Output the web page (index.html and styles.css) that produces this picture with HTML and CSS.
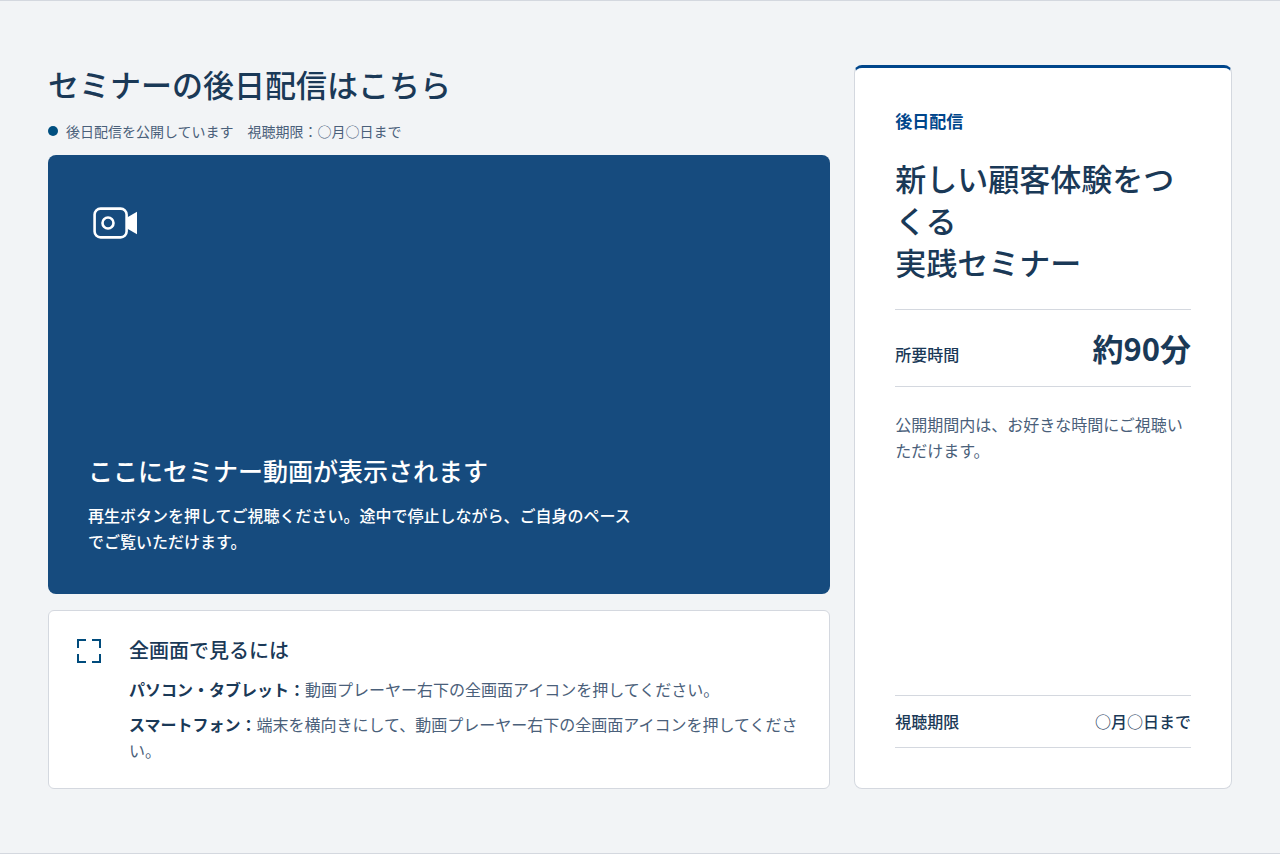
FILE: index.html
```html
<!DOCTYPE html>
<html lang="ja">
<head>
<meta charset="utf-8">
<meta name="viewport" content="width=device-width, initial-scale=1">
<title>セミナーの後日配信はこちら</title>
<link rel="stylesheet" href="styles.css">
</head>
<body>
<main class="page">
  <section class="watch">
    <h1 class="watch-title">セミナーの後日配信はこちら</h1>
    <p class="status"><span class="status-dot"></span>後日配信を公開しています　視聴期限：○月○日まで</p>
    <div class="video">
      <svg class="video-icon" viewBox="0 0 56 56" aria-hidden="true">
        <rect x="6.6" y="13.6" width="32" height="28.8" rx="6" fill="none" stroke="#fff" stroke-width="2.6"/>
        <circle cx="20" cy="28" r="5.5" fill="none" stroke="#fff" stroke-width="2.6"/>
        <path d="M39 22.6 L49 16.7 V39.3 L39 33.4 Z" fill="#fff"/>
      </svg>
      <div class="video-copy">
        <h2 class="video-title">ここにセミナー動画が表示されます</h2>
        <p class="video-text">再生ボタンを押してご視聴ください。途中で停止しながら、ご自身のペースでご覧いただけます。</p>
      </div>
    </div>
    <div class="help">
      <svg class="help-icon" viewBox="0 0 32 32" aria-hidden="true">
        <path d="M13 5H5V13M19 5H27V13M5 19V27H13M27 19V27H19" fill="none" stroke="#004b7c" stroke-width="2"/>
      </svg>
      <div class="help-body">
        <h2 class="help-title">全画面で見るには</h2>
        <p class="help-text"><strong>パソコン・タブレット：</strong>動画プレーヤー右下の全画面アイコンを押してください。</p>
        <p class="help-text"><strong>スマートフォン：</strong>端末を横向きにして、動画プレーヤー右下の全画面アイコンを押してください。</p>
      </div>
    </div>
  </section>
  <aside class="info">
    <p class="info-label">後日配信</p>
    <h2 class="info-title">新しい顧客体験をつくる<br>実践セミナー</h2>
    <dl class="duration">
      <dt>所要時間</dt>
      <dd>約90分</dd>
    </dl>
    <p class="info-text">公開期間内は、お好きな時間にご視聴いただけます。</p>
    <dl class="deadline">
      <dt>視聴期限</dt>
      <dd>○月○日まで</dd>
    </dl>
  </aside>
</main>
</body>
</html>
```
FILE: styles.css
```css
* {
  box-sizing: border-box;
  margin: 0;
}

body {
  background: #f2f4f6;
  color: #1a3957;
  font: 400 16px/26px "Noto Sans CJK JP", sans-serif;
}

.page {
  display: grid;
  grid-template-columns: minmax(0, 2.07fr) minmax(0, 1fr);
  gap: 24px;
  min-height: 100vh;
  padding: 64px 48px;
  border-top: 1px solid #d4d8df;
  border-bottom: 1px solid #d4d8df;
}

.watch {
  display: flex;
  flex-direction: column;
}

.watch-title {
  font-size: 31px;
  font-weight: 500;
  line-height: 38px;
}

.status {
  display: flex;
  align-items: center;
  gap: 8px;
  margin: 16px 0 12px;
  color: #4a607a;
  font-size: 14px;
  line-height: 24px;
}

.status-dot {
  width: 10px;
  height: 10px;
  border-radius: 50%;
  background: #004f80;
}

.video {
  display: flex;
  flex: 1;
  flex-direction: column;
  justify-content: space-between;
  gap: 24px;
  padding: 40px;
  border-radius: 8px;
  background: #164b7e;
  color: #fff;
}

.video-icon {
  width: 56px;
  height: 56px;
}

.video-title {
  margin-bottom: 14px;
  font-size: 25px;
  font-weight: 500;
  line-height: 36px;
}

.video-text {
  max-width: 550px;
  font-weight: 500;
}

.help {
  display: flex;
  gap: 24px;
  margin-top: 16px;
  padding: 24px;
  border: 1px solid #d4d8df;
  border-radius: 6px;
  background: #fff;
}

.help-icon {
  flex: none;
  width: 32px;
  height: 32px;
}

.help-body {
  padding-bottom: 1px;
}

.help-title {
  margin-bottom: 11px;
  font-size: 20px;
  font-weight: 500;
  line-height: 30px;
}

.help-text {
  color: #4a607a;
}

.help-text + .help-text {
  margin-top: 9px;
}

.help-text strong {
  color: #1a3957;
  font-weight: 700;
}

.info {
  display: flex;
  flex-direction: column;
  padding: 40px;
  border: 1px solid #d4d8df;
  border-top: 3px solid #00468b;
  border-radius: 8px;
  background: #fff;
}

.info-label {
  margin-bottom: 23px;
  color: #00468b;
  font-size: 17px;
  font-weight: 700;
}

.info-title {
  margin-bottom: 26px;
  font-size: 31px;
  font-weight: 500;
  line-height: 42px;
}

.duration,
.deadline {
  display: flex;
  align-items: baseline;
  justify-content: space-between;
  border-top: 1px solid #d4d8df;
  border-bottom: 1px solid #d4d8df;
  font-weight: 500;
}

.duration {
  margin-bottom: 24px;
  padding: 16px 0;
}

.duration dd {
  font-size: 31px;
  font-weight: 700;
  line-height: 44px;
}

.info-text {
  margin-bottom: 24px;
  color: #4a607a;
}

.deadline {
  margin-top: auto;
  padding: 12px 0 13px;
}
```
